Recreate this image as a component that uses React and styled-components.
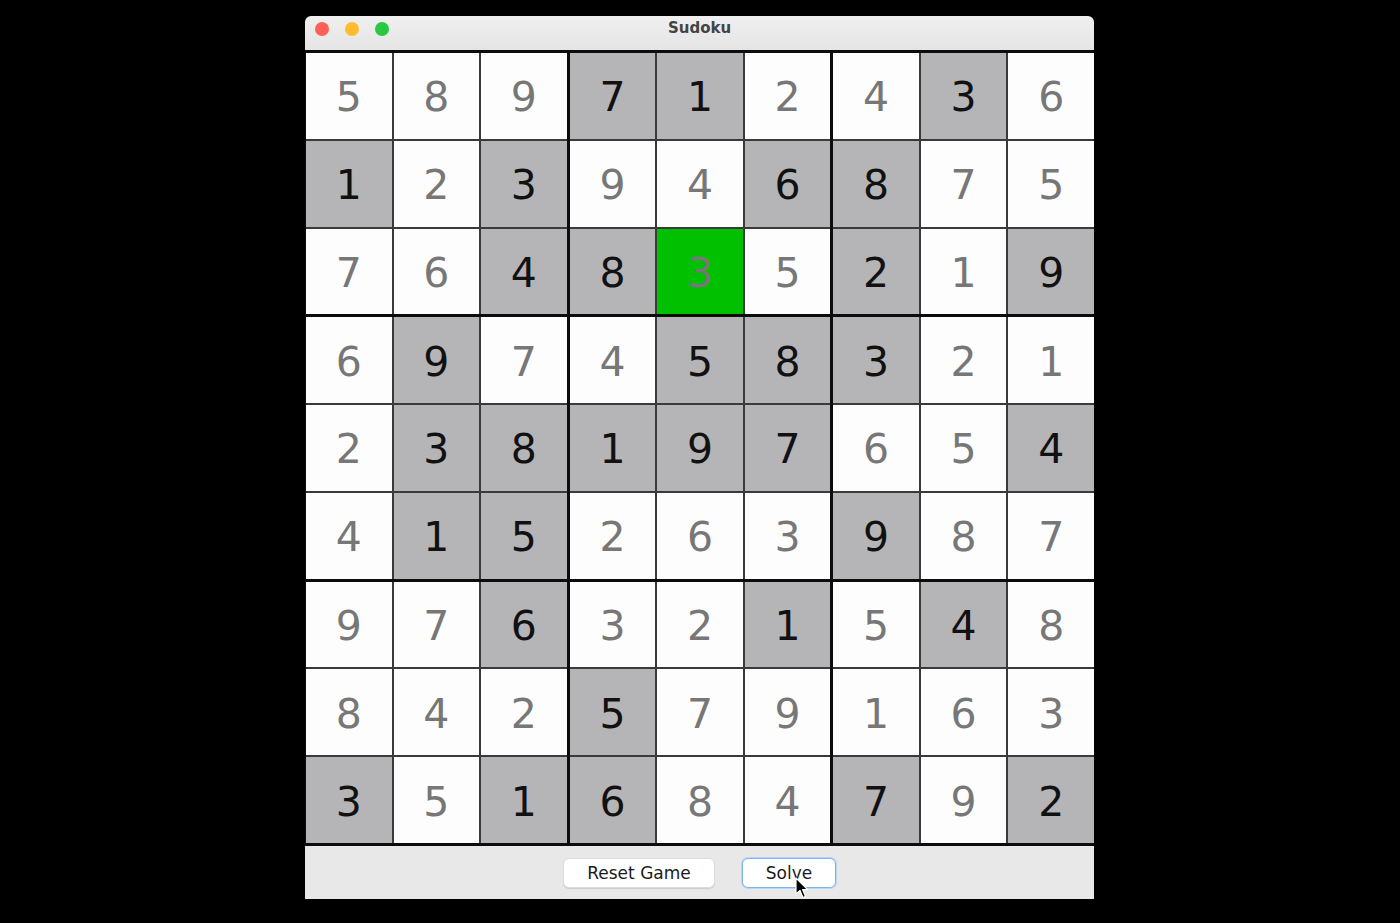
import styled, { createGlobalStyle } from "styled-components";
import React from "react";

const GlobalStyle = createGlobalStyle`
  html, body {
    margin: 0;
    padding: 0;
    background: #000;
  }
`

// digits row by row, "g" = given (grey cell), "h" = highlighted
const ROWS = [
  "5 8 9 7g 1g 2 4 3g 6",
  "1g 2 3g 9 4 6g 8g 7 5",
  "7 6 4g 8g 3h 5 2g 1 9g",
  "6 9g 7 4 5g 8g 3g 2 1",
  "2 3g 8g 1g 9g 7g 6 5 4g",
  "4 1g 5g 2 6 3 9g 8 7",
  "9 7 6g 3 2 1g 5 4g 8",
  "8 4 2 5g 7 9 1 6 3",
  "3g 5 1g 6g 8 4 7g 9 2g",
].map((r) => r.split(" ").map((c) => ({ value: c[0], kind: c[1] || "" })));

const boxes = [0, 1, 2, 3, 4, 5, 6, 7, 8].map((b) => {
  const br = Math.floor(b / 3) * 3;
  const bc = (b % 3) * 3;
  const cells = [];
  for (let r = 0; r < 3; r++) {
    for (let c = 0; c < 3; c++) {
      cells.push(ROWS[br + r][bc + c]);
    }
  }
  return cells;
});

const App = () => {
  return (
    <Page>
      <GlobalStyle />
      <Window>
        <TitleBar>
          <Lights>
            <Light color="#fe5f57" />
            <Light color="#febc2e" />
            <Light color="#28c840" />
          </Lights>
          <Title>Sudoku</Title>
        </TitleBar>
        <Board>
          {boxes.map((cells, b) => (
            <Box key={b}>
              {cells.map((cell, i) => (
                <Cell key={i} kind={cell.kind}>
                  {cell.value}
                </Cell>
              ))}
            </Box>
          ))}
        </Board>
        <BottomBar>
          <Button>Reset Game</Button>
          <Button focused>
            Solve
            <Cursor viewBox="0 0 14 22">
              <path
                d="M1 1 L1 17 L5 13.5 L8 20.5 L10.5 19.4 L7.6 12.6 L12.6 12.6 Z"
                fill="#000"
                stroke="#fff"
                strokeWidth="1.2"
                strokeLinejoin="round"
              />
            </Cursor>
          </Button>
        </BottomBar>
      </Window>
    </Page>
  );
};

const Page = styled.div`
  min-height: 923px;
  display: flex;
  justify-content: center;
  padding-top: 16px;
  box-sizing: border-box;
  font-family: "DejaVu Sans", "Liberation Sans", sans-serif;
`

const Window = styled.div`
  width: 789px;
  margin-left: -1px;
  display: flex;
  flex-direction: column;
  border-radius: 6px 6px 0 0;
  overflow: hidden;
`

const TitleBar = styled.div`
  position: relative;
  height: 34px;
  box-sizing: border-box;
  padding-top: 3px;
  display: flex;
  justify-content: center;
  background: linear-gradient(#f0eff0, #e6e5e6);
`

const Lights = styled.div`
  position: absolute;
  left: 10px;
  top: 6px;
  display: flex;
  gap: 16px;
`

const Light = styled.span`
  width: 14px;
  height: 14px;
  border-radius: 50%;
  background: ${(p) => p.color};
`

const Title = styled.div`
  font-size: 15px;
  font-weight: 700;
  color: #444;
`

const Board = styled.div`
  height: 796px;
  box-sizing: border-box;
  display: grid;
  grid-template-columns: repeat(3, 1fr);
  grid-template-rows: repeat(3, 1fr);
  gap: 3px;
  padding: 3px 0 3px 1px;
  background: #0c0c0c;
`

const Box = styled.div`
  display: grid;
  grid-template-columns: repeat(3, 1fr);
  grid-template-rows: repeat(3, 1fr);
  gap: 2px;
  background: #3a3a3a;
`

const Cell = styled.div`
  display: flex;
  align-items: center;
  justify-content: center;
  padding-top: 3px;
  font-size: 41px;
  background: ${(p) =>
    p.kind === "g" ? "#b5b4b6" : p.kind === "h" ? "#00c000" : "#fdfdfd"};
  color: ${(p) => (p.kind === "g" ? "#111" : "#777")};
`

const BottomBar = styled.div`
  height: 53px;
  display: flex;
  align-items: center;
  justify-content: center;
  gap: 27px;
  background: #e9e8e9;
`

const Button = styled.button`
  position: relative;
  height: 30px;
  padding: 0 21px;
  font-family: "DejaVu Sans", "Liberation Sans", sans-serif;
  font-size: 17px;
  color: #1a1a1a;
  background: #fff;
  border-radius: 6px;
  border: ${(p) => (p.focused ? "1.5px solid #7fb2ea" : "1px solid #dcdcdc")};
  box-shadow: ${(p) =>
    p.focused ? "0 0 0 1px #b9d6f5" : "0 1px 1px rgba(0,0,0,0.12)"};
  min-width: ${(p) => (p.focused ? "94px" : "152px")};
`

const Cursor = styled.svg`
  position: absolute;
  left: 52px;
  top: 18px;
  width: 14px;
  height: 22px;
`

export default App;
